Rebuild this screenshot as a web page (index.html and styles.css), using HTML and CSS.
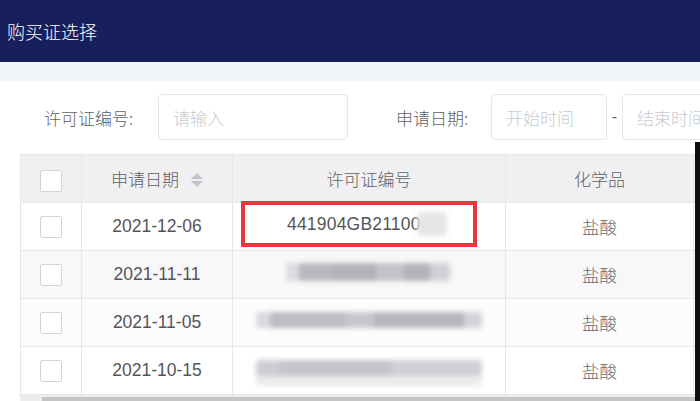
FILE: index.html
```html
<!DOCTYPE html>
<html lang="zh">
<head>
<meta charset="utf-8">
<link rel="stylesheet" href="styles.css">
</head>
<body>
<div class="header">购买证选择</div>
<div class="panel">
  <div class="filters">
    <span class="label">许可证编号:</span>
    <div class="input wide"><span class="ph">请输入</span></div>
    <span class="label label2">申请日期:</span>
    <div class="input date"><span class="ph">开始时间</span></div>
    <span class="dash">-</span>
    <div class="input date"><span class="ph">结束时间</span></div>
  </div>
  <div class="tablewrap">
    <table class="grid">
      <colgroup>
        <col class="c1"><col class="c2"><col class="c3"><col class="c4"><col class="c5">
      </colgroup>
      <thead>
        <tr>
          <th><span class="cb"></span></th>
          <th>申请日期 <span class="sort"><i class="up"></i><i class="down"></i></span></th>
          <th>许可证编号</th>
          <th>化学品</th>
          <th></th>
        </tr>
      </thead>
      <tbody>
        <tr>
          <td><span class="cb"></span></td>
          <td class="date">2021-12-06</td>
          <td class="lic">
            <div class="hl"><span class="num">441904GB21100</span><span class="blur b0"></span></div>
          </td>
          <td class="chem">盐酸</td>
          <td></td>
        </tr>
        <tr class="alt">
          <td><span class="cb"></span></td>
          <td class="date">2021-11-11</td>
          <td class="lic"><span class="blur b1"></span></td>
          <td class="chem">盐酸</td>
          <td></td>
        </tr>
        <tr class="alt2">
          <td><span class="cb"></span></td>
          <td class="date">2021-11-05</td>
          <td class="lic"><span class="blur b2"></span></td>
          <td class="chem">盐酸</td>
          <td></td>
        </tr>
        <tr>
          <td><span class="cb"></span></td>
          <td class="date">2021-10-15</td>
          <td class="lic"><span class="blur b3"></span></td>
          <td class="chem">盐酸</td>
          <td></td>
        </tr>
      </tbody>
    </table>
    <div class="hscroll"><div class="thumb"></div></div>
  </div>
</div>
<div class="edge"></div>
</body>
</html>
```
FILE: styles.css
```css
* { box-sizing: border-box; }
html, body { margin: 0; padding: 0; }
body {
  width: 700px;
  height: 401px;
  overflow: hidden;
  background: #f3f6f9;
  font-family: "Liberation Sans", "Noto Sans CJK SC", sans-serif;
  color: #606266;
  position: relative;
}
.header {
  height: 62px;
  line-height: 62px;
  background: #171f5c;
  color: #ffffff;
  font-size: 18px;
  padding-left: 7px;
  font-family: "Noto Sans CJK SC", sans-serif;
  font-weight: 300;
}
.panel {
  margin-top: 19px;
  background: #ffffff;
  padding: 13px 0 0 20px;
  height: 320px;
  overflow: hidden;
}
.filters {
  display: flex;
  align-items: center;
  height: 46px;
  padding-left: 24px;
  white-space: nowrap;
}
.label {
  font-size: 17px;
  color: #5f6266;
  font-family: "Noto Sans CJK SC", sans-serif;
  font-weight: 300;
  width: 114px;
  flex: none;
}
.label2 { margin-left: 48px; width: 95px; }
.input {
  flex: none;
  height: 46px;
  border: 1px solid #e4e7ed;
  border-radius: 4px;
  display: flex;
  align-items: center;
  padding-left: 14px;
  overflow: hidden;
}
.input.wide { width: 190px; }
.input.date { width: 116px; }
.ph {
  color: #c8cacf;
  font-size: 17px;
  font-family: "Noto Sans CJK SC", sans-serif;
  font-weight: 300;
  white-space: nowrap;
}
.dash { width: 15px; text-align: center; flex: none; color: #606266; font-size: 16px; }
.tablewrap {
  margin-top: 14px;
  width: 760px;
}
.grid {
  border-collapse: collapse;
  table-layout: fixed;
  width: 860px;
  font-size: 17.5px;
}
.c1 { width: 61px; }
.c2 { width: 151px; }
.c3 { width: 273px; }
.c4 { width: 188px; }
.c5 { width: 187px; }
.grid th, .grid td {
  height: 48px;
  border: 1px solid #e7e7ea;
  text-align: center;
  padding: 0;
  vertical-align: middle;
  white-space: nowrap;
}
.grid thead th {
  background: #f0f0f2;
  font-weight: 300;
  color: #606266;
  font-family: "Noto Sans CJK SC", sans-serif;
  font-size: 17px;
}
.grid tbody tr { background: #ffffff; }
.grid tbody tr.alt { background: #f8f8fa; }
.grid tbody tr.alt2 { background: #fcfbfd; }
.cb {
  display: inline-block;
  width: 22px;
  height: 22px;
  border: 1px solid #d4d4d8;
  border-radius: 2px;
  background: #fff;
  vertical-align: middle;
}
.sort {
  display: inline-flex;
  flex-direction: column;
  gap: 2px;
  vertical-align: middle;
  margin-left: 8px;
  position: relative;
  top: -1px;
}
.sort i {
  display: block;
  width: 0;
  height: 0;
  border-left: 6px solid transparent;
  border-right: 6px solid transparent;
}
.sort .up { border-bottom: 6px solid #c0c4cc; }
.sort .down { border-top: 6px solid #c0c4cc; }
.date { color: #555558; }
.chem {
  color: #6a6a6e;
  font-family: "Noto Sans CJK SC", sans-serif;
  font-weight: 300;
}
.lic { position: relative; }
.hl {
  position: absolute;
  left: 8px;
  top: -2px;
  width: 236px;
  height: 46px;
  border: 4px solid #e8363c;
  display: flex;
  align-items: center;
  padding-left: 42px;
  color: #555558;
  background: #fff;
}
.num { letter-spacing: 0.2px; }
.blur {
  display: inline-block;
  filter: blur(2.5px);
  border-radius: 3px;
}
.b0 {
  width: 30px;
  height: 24px;
  background: #e6e6e8;
  margin-left: -4px;
}
.b1 {
  width: 164px;
  height: 18px;
  background: linear-gradient(90deg, #dcdce0 0 8%, #b9b9bd 8% 30%, #b3b3b7 30% 55%, #c4c4c8 55% 72%, #b5b5b9 72% 88%, #d0d0d4 88% 100%);
  margin-left: -2px;
}
.b2 {
  width: 226px;
  height: 16px;
  background: linear-gradient(90deg, #dadade 0 6%, #bdbdc1 6% 40%, #c8c8cc 40% 52%, #b8b8bc 52% 92%, #d4d4d8 92% 100%);
  margin-left: 0;
}
.b3 {
  width: 226px;
  height: 16px;
  background: linear-gradient(90deg, #cdcdd1 0 10%, #c6c6ca 10% 60%, #d0d0d4 60% 100%);
  margin-left: 0;
  box-shadow: 0 10px 0 0 #ececef;
}
.hscroll {
  height: 7px;
  background: #ececee;
  width: 700px;
  padding-left: 22px;
  padding-top: 2px;
}
.thumb {
  height: 5px;
  background: #c4c4c6;
  width: 680px;
}
.edge {
  position: absolute;
  right: 0;
  top: 142px;
  width: 5px;
  bottom: 0;
  background: #0e0e10;
}
```
